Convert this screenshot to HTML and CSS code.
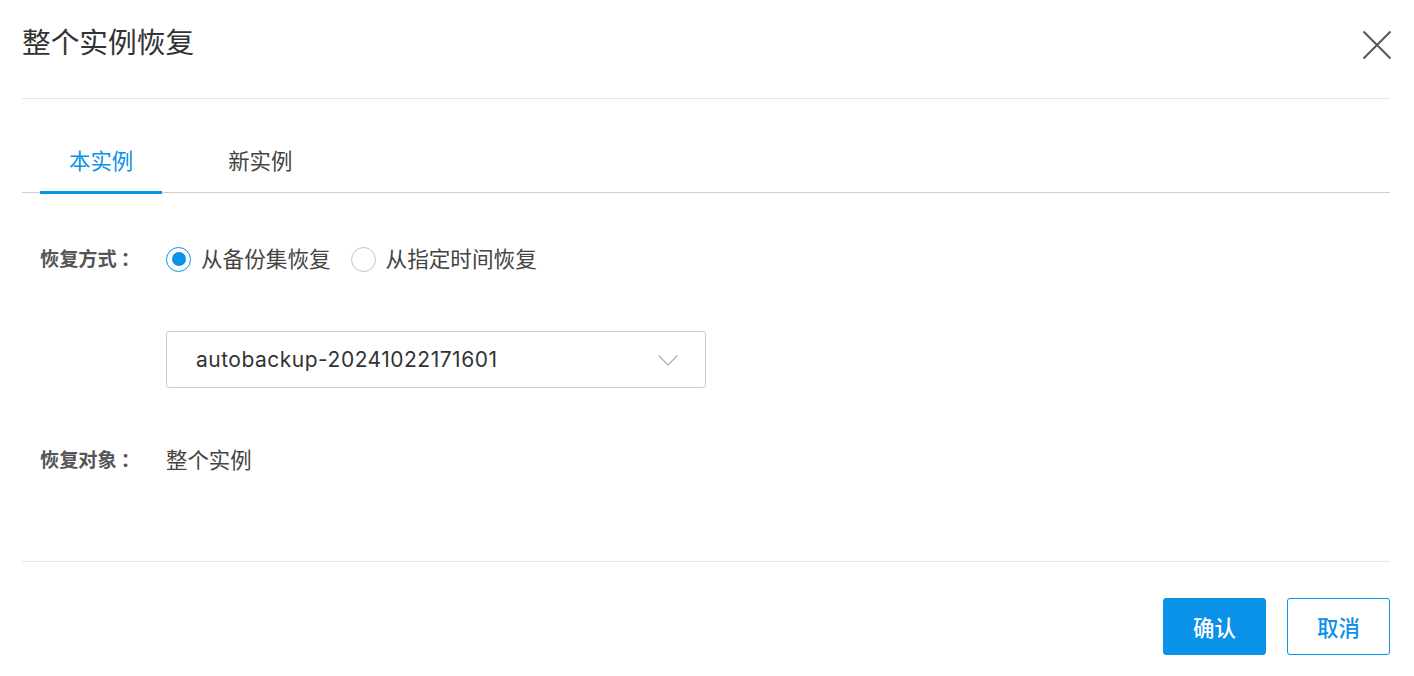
FILE: index.html
```html
<!DOCTYPE html>
<html lang="zh-CN">
<head>
<meta charset="utf-8">
<title>整个实例恢复</title>
<link rel="stylesheet" href="styles.css">
</head>
<body>
<div class="dialog">
  <div class="dialog-header">
    <h1 class="dialog-title">整个实例恢复</h1>
    <button class="close-btn" aria-label="关闭">
      <svg width="30" height="30" viewBox="0 0 30 30"><path d="M1.5 1.5 L28.5 28.5 M28.5 1.5 L1.5 28.5" stroke="#555" stroke-width="2" fill="none"/></svg>
    </button>
  </div>

  <div class="tabs">
    <div class="tab tab-active">本实例</div>
    <div class="tab">新实例</div>
  </div>

  <div class="form">
    <div class="form-row">
      <div class="form-label">恢复方式<span class="colon">：</span></div>
      <div class="radio-group">
        <label class="radio radio-checked"><span class="radio-circle"></span><span class="radio-text">从备份集恢复</span></label>
        <label class="radio"><span class="radio-circle"></span><span class="radio-text">从指定时间恢复</span></label>
      </div>
    </div>

    <div class="form-row select-row">
      <div class="form-label"></div>
      <div class="select">
        <span class="select-value">autobackup-20241022171601</span>
        <svg class="select-arrow" width="20" height="11" viewBox="0 0 20 11"><path d="M0.5 0.5 L10 10 L19.5 0.5" stroke="#aaa" stroke-width="1.2" fill="none"/></svg>
      </div>
    </div>

    <div class="form-row target-row">
      <div class="form-label">恢复对象<span class="colon">：</span></div>
      <div class="form-value">整个实例</div>
    </div>
  </div>

  <div class="dialog-footer">
    <button class="btn btn-primary">确认</button>
    <button class="btn btn-default">取消</button>
  </div>
</div>
</body>
</html>
```

FILE: styles.css
```css
* { box-sizing: border-box; }
html, body { margin: 0; padding: 0; background: #fff; }
body {
  font-family: "Inter", "Noto Sans CJK SC", sans-serif;
  color: #333;
}
.dialog {
  width: 1414px;
  height: 676px;
  padding: 0 24px 0 22px;
}
.dialog-header {
  display: flex;
  justify-content: space-between;
  align-items: flex-start;
  padding-top: 23px;
  height: 99px;
  border-bottom: 1px solid #e6e6e6;
}
.dialog-title {
  margin: 0;
  font-size: 28.7px;
  line-height: 40px;
  font-weight: 400;
  color: #333;
}
.close-btn {
  border: 0;
  background: none;
  padding: 0;
  margin: 7px -2px 0 0;
  width: 30px;
  height: 30px;
  cursor: pointer;
}
.close-btn svg { display: block; }

.tabs {
  display: flex;
  margin-top: 40px;
  border-bottom: 1px solid #cfcfcf;
  padding-left: 18px;
  gap: 37px;
}
.tab {
  font-size: 21.4px;
  line-height: 44px;
  padding: 0 29px 8px;
  border-bottom: 3px solid transparent;
  margin-bottom: -2px;
  color: #444;
}
.tab-active {
  color: #0a91e8;
  border-bottom-color: #0a91e8;
}

.form {
  padding-left: 18px;
  margin-top: 46px;
}
.form-row {
  display: flex;
  align-items: center;
  height: 40px;
}
.form-label {
  width: 126px;
  flex: none;
  font-size: 19.2px;
  font-weight: 700;
  color: #555;
  line-height: 40px;
  height: 40px;
  margin-top: -2px;
}
.colon {
  font-family: "Noto Sans CJK SC", sans-serif;
  padding-left: 4px;
}
.radio-group {
  display: flex;
  align-items: center;
  gap: 20px;
}
.radio {
  display: flex;
  align-items: center;
  gap: 10px;
  cursor: pointer;
}
.radio-circle {
  width: 25px;
  height: 25px;
  border-radius: 50%;
  border: 1px solid #c4c4c4;
  background: #fff;
  position: relative;
}
.radio-checked .radio-circle {
  border-color: #0a91e8;
}
.radio-checked .radio-circle::after {
  content: "";
  position: absolute;
  left: 4.5px;
  top: 4.5px;
  width: 14px;
  height: 14px;
  border-radius: 50%;
  background: #0a91e8;
}
.radio-text {
  font-size: 21.6px;
  line-height: 40px;
  color: #444;
}

.select-row { margin-top: 52px; height: 57px; }
.select {
  width: 540px;
  height: 57px;
  border: 1px solid #cccccc;
  border-radius: 3px;
  display: flex;
  align-items: center;
  justify-content: space-between;
  padding: 0 27px 0 29px;
}
.select-value {
  font-size: 21px;
  letter-spacing: 0.5px;
  color: #333;
}
.select-arrow { display: block; margin-top: 1px; }

.target-row { margin-top: 52px; }
.form-value {
  font-size: 21.4px;
  line-height: 40px;
  color: #444;
}

.dialog-footer {
  margin-top: 81px;
  border-top: 1px solid #e6e6e6;
  display: flex;
  justify-content: flex-end;
  gap: 21px;
  padding-top: 36px;
}
.btn {
  width: 103px;
  height: 57px;
  border-radius: 3px;
  font-family: "Inter", "Noto Sans CJK SC", sans-serif;
  font-size: 21.4px;
  font-weight: 500;
  cursor: pointer;
  padding: 0;
}
.btn-primary {
  background: #0a91e8;
  border: 1px solid #0a91e8;
  color: #fff;
}
.btn-default {
  background: #fff;
  border: 1px solid #0a91e8;
  color: #0a91e8;
}
```
